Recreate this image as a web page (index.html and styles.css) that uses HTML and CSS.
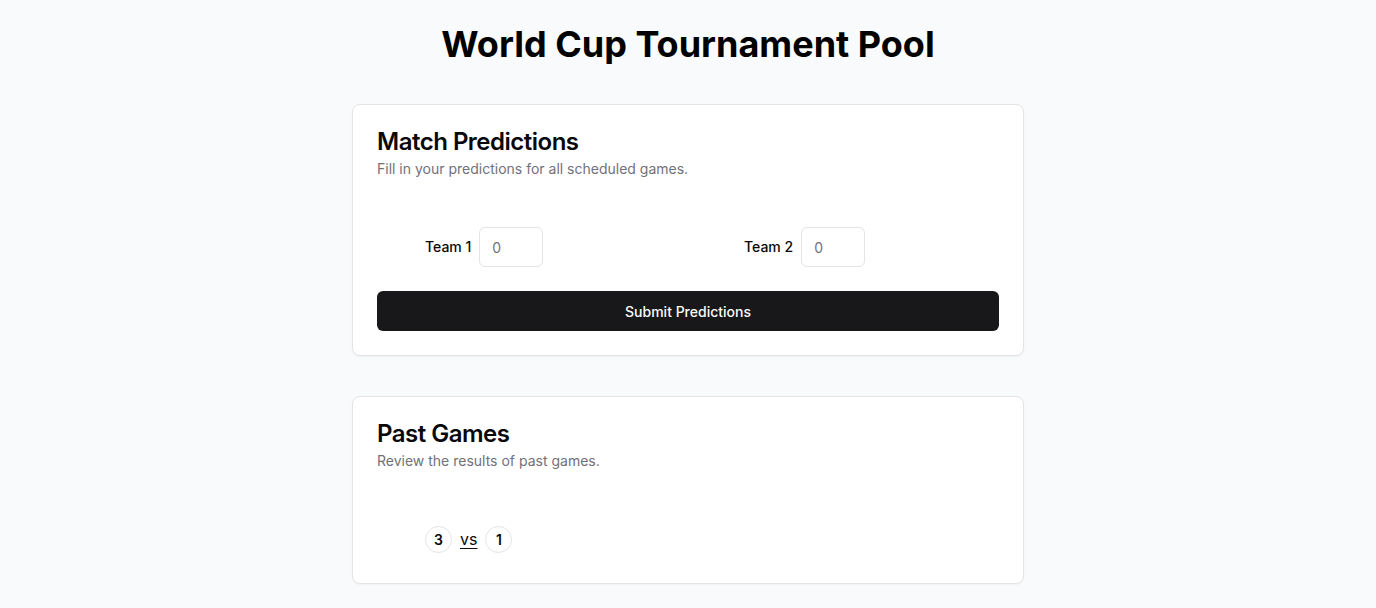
FILE: index.html
```html
<!DOCTYPE html>
<html lang="en">
<head>
<meta charset="utf-8">
<title>World Cup Tournament Pool</title>
<link rel="stylesheet" href="styles.css">
</head>
<body>
<main class="page">
  <h1 class="page-title">World Cup Tournament Pool</h1>

  <section class="card">
    <header class="card-header">
      <h2 class="card-title">Match Predictions</h2>
      <p class="card-desc">Fill in your predictions for all scheduled games.</p>
    </header>
    <div class="card-content">
      <div class="match-row">
        <div class="team">
          <label class="team-label">Team 1</label>
          <input class="score-input" type="number" placeholder="0">
        </div>
        <div class="team">
          <label class="team-label">Team 2</label>
          <input class="score-input" type="number" placeholder="0">
        </div>
      </div>
      <button class="submit-btn">Submit Predictions</button>
    </div>
  </section>

  <section class="card">
    <header class="card-header">
      <h2 class="card-title">Past Games</h2>
      <p class="card-desc">Review the results of past games.</p>
    </header>
    <div class="card-content">
      <div class="result-row">
        <span class="score-badge">3</span>
        <span class="vs">vs</span>
        <span class="score-badge">1</span>
      </div>
    </div>
  </section>
</main>
</body>
</html>
```

FILE: styles.css
```css
* { box-sizing: border-box; }

html, body {
  margin: 0;
  padding: 0;
}

body {
  background: #f9fafb;
  font-family: "Inter", "Liberation Sans", sans-serif;
  color: #09090b;
}

.page {
  padding: 24px 0;
  display: flex;
  flex-direction: column;
  align-items: center;
}

.page-title {
  margin: 0 0 40px;
  font-size: 36px;
  line-height: 40px;
  font-weight: 700;
  color: #000;
}

.card {
  width: 672px;
  background: #fff;
  border: 1px solid #e4e4e7;
  border-radius: 8px;
  box-shadow: 0 1px 2px rgba(0,0,0,0.04);
  margin-bottom: 40px;
}

.card-header {
  padding: 24px;
  display: flex;
  flex-direction: column;
  gap: 5px;
}

.card-title {
  margin: 1px 0 0;
  font-size: 24px;
  line-height: 24px;
  font-weight: 600;
  letter-spacing: -0.5px;
}

.card-desc {
  margin: 0;
  font-size: 14px;
  line-height: 20px;
  color: #71717a;
}

.card-content {
  padding: 0 24px 24px;
  display: flex;
  flex-direction: column;
  gap: 24px;
}

.match-row {
  margin-top: 24px;
  padding-left: 48px;
  display: grid;
  grid-template-columns: 319px auto;
  justify-content: start;
}

.team {
  display: flex;
  align-items: center;
  gap: 8px;
}

.team-label {
  font-size: 14px;
  font-weight: 500;
  line-height: 20px;
}

.score-input {
  width: 64px;
  height: 40px;
  border: 1px solid #e4e4e7;
  border-radius: 6px;
  padding: 0 12px;
  font-family: inherit;
  font-size: 14px;
  color: #09090b;
  background: #fff;
  outline: none;
  -moz-appearance: textfield;
}

.score-input::-webkit-outer-spin-button,
.score-input::-webkit-inner-spin-button {
  -webkit-appearance: none;
  margin: 0;
}

.score-input::placeholder {
  color: #71717a;
}

.submit-btn {
  height: 40px;
  width: 100%;
  border: none;
  border-radius: 6px;
  background: #18181b;
  color: #fafafa;
  font-family: inherit;
  font-size: 14px;
  font-weight: 500;
  cursor: pointer;
}

.result-row {
  margin-top: 24px;
  padding-left: 48px;
  height: 40px;
  display: flex;
  align-items: center;
  gap: 8px;
}

.score-badge {
  width: 27px;
  height: 27px;
  border: 1px solid #e4e4e7;
  border-radius: 50%;
  display: flex;
  align-items: center;
  justify-content: center;
  font-size: 14px;
  font-weight: 600;
}

.vs {
  font-size: 16px;
  line-height: 20px;
  text-decoration: underline;
  text-underline-offset: 3px;
}
```
